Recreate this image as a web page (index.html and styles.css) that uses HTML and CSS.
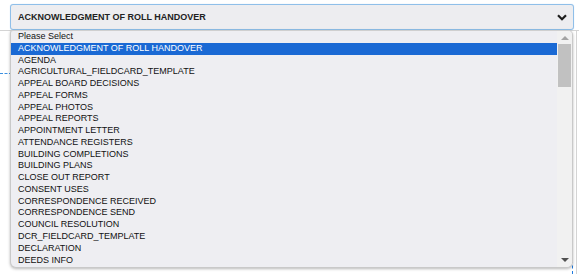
FILE: index.html
```html
<!DOCTYPE html>
<html>
<head>
<meta charset="utf-8">
<link rel="stylesheet" href="styles.css">
</head>
<body>
<div class="page">
  <div class="backdrop">
    <div class="rule-h"></div>
    <div class="rule-v"></div>
    <div class="dash-h"></div>
    <div class="dash-v"></div>
  </div>
  <div class="field">
    <div class="select">
      <span class="value">ACKNOWLEDGMENT OF ROLL HANDOVER</span>
      <svg class="chev" width="10" height="7" viewBox="0 0 10 7"><path d="M1 1.2 L5 5.2 L9 1.2" fill="none" stroke="#1e1e1e" stroke-width="2.2"/></svg>
    </div>
    <div class="list">
      <div class="items">
        <div class="opt">Please Select</div>
        <div class="opt sel">ACKNOWLEDGMENT OF ROLL HANDOVER</div>
        <div class="opt">AGENDA</div>
        <div class="opt">AGRICULTURAL_FIELDCARD_TEMPLATE</div>
        <div class="opt">APPEAL BOARD DECISIONS</div>
        <div class="opt">APPEAL FORMS</div>
        <div class="opt">APPEAL PHOTOS</div>
        <div class="opt">APPEAL REPORTS</div>
        <div class="opt">APPOINTMENT LETTER</div>
        <div class="opt">ATTENDANCE REGISTERS</div>
        <div class="opt">BUILDING COMPLETIONS</div>
        <div class="opt">BUILDING PLANS</div>
        <div class="opt">CLOSE OUT REPORT</div>
        <div class="opt">CONSENT USES</div>
        <div class="opt">CORRESPONDENCE RECEIVED</div>
        <div class="opt">CORRESPONDENCE SEND</div>
        <div class="opt">COUNCIL RESOLUTION</div>
        <div class="opt">DCR_FIELDCARD_TEMPLATE</div>
        <div class="opt">DECLARATION</div>
        <div class="opt">DEEDS INFO</div>
      </div>
      <div class="scrollbar">
        <div class="arrow up"></div>
        <div class="track"><div class="thumb"></div></div>
        <div class="arrow down"></div>
      </div>
    </div>
  </div>
</div>
</body>
</html>
```
FILE: styles.css
```css
html, body {
  margin: 0;
  padding: 0;
  background: #ffffff;
}
.page {
  position: relative;
  width: 579px;
  height: 274px;
  overflow: hidden;
  font-family: "Liberation Sans", Arial, sans-serif;
}
.backdrop .rule-h {
  position: absolute;
  left: 0;
  top: 30px;
  width: 579px;
  height: 1px;
  background: #d4d4d4;
}
.backdrop .rule-v {
  position: absolute;
  left: 576px;
  top: 30px;
  width: 1px;
  height: 244px;
  background: #d4d4d4;
}
.backdrop .dash-h {
  position: absolute;
  left: 0;
  top: 73px;
  width: 12px;
  border-top: 1px dashed #3b8fe0;
}
.backdrop .dash-v {
  position: absolute;
  left: 572px;
  top: 260px;
  height: 14px;
  border-left: 1px dashed #1f7be0;
}
.field {
  position: relative;
  padding: 4px 5px 0 10px;
}
.select {
  position: relative;
  height: 24px;
  border: 1px solid #8fbfe9;
  border-radius: 3px;
  background: #ededf0;
  display: flex;
  align-items: center;
  justify-content: space-between;
  padding: 0 6px 0 7px;
  box-shadow: 0 0 1px #b7d5f2;
}
.value {
  font-weight: bold;
  font-size: 9px;
  color: #222;
}
.chev {
  display: block;
  margin-top: 1px;
}
.list {
  position: absolute;
  left: 10px;
  top: 30px;
  width: 561px;
  height: 236px;
  background: #eeeef2;
  border: 1px solid #c9c9c9;
  border-top-color: #cfcfcf;
  border-radius: 3px 5px 6px 6px;
  box-shadow: 0 1px 3px rgba(0,0,0,0.28);
  display: flex;
  overflow: hidden;
}
.items {
  flex: 1;
  padding-top: 0;
}
.opt {
  height: 11.77px;
  line-height: 11.77px;
  font-size: 9px;
  color: #111;
  padding-left: 7px;
  white-space: nowrap;
}
.opt.sel {
  background: #1a69d4;
  color: #ffffff;
}
.scrollbar {
  width: 15px;
  background: #f1f1f1;
  display: flex;
  flex-direction: column;
  align-items: center;
}
.arrow {
  width: 0;
  height: 0;
  border-left: 4px solid transparent;
  border-right: 4px solid transparent;
}
.arrow.up {
  margin-top: 5px;
  border-bottom: 4px solid #a3a3a3;
}
.arrow.down {
  margin-bottom: 5px;
  border-top: 4px solid #505050;
}
.track {
  flex: 1;
  width: 100%;
  padding: 4px 1px 0 1px;
  box-sizing: border-box;
}
.thumb {
  height: 43px;
  background: #c1c1c1;
}
```
